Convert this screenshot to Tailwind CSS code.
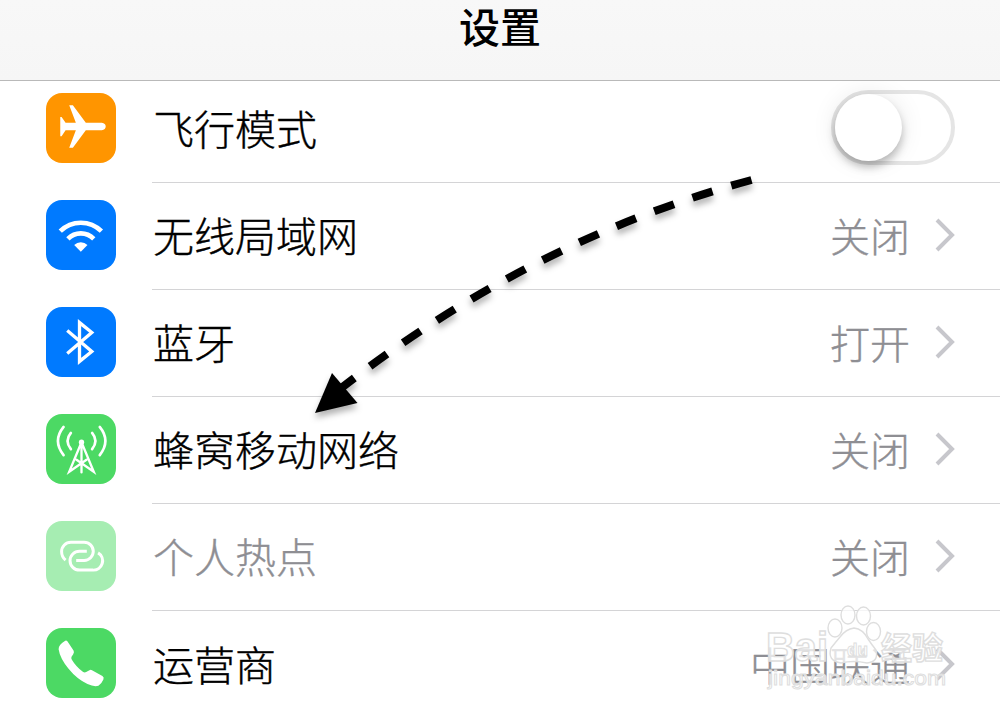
<!DOCTYPE html>
<html lang="zh-CN">
<head>
    <meta charset="UTF-8">
    <meta name="viewport" content="width=device-width, initial-scale=1.0">
    <title>设置</title>
    <script src="https://cdn.jsdelivr.net/npm/@tailwindcss/browser@4"></script>
</head>
<body class="bg-white text-black font-['Noto_Sans_CJK_SC',sans-serif] overflow-hidden">
    <div class="relative w-[1000px] h-[713px] overflow-hidden">

        <!-- Header -->
        <header class="relative z-10 h-[81px] flex justify-center border-b border-[#b9b9b9] bg-linear-to-b from-[#f8f8f8] to-[#f6f6f6]">
            <h1 class="text-[41px] leading-[51px] font-medium">设置</h1>
        </header>

        <!-- Settings list -->
        <main class="-mt-[5px] [-webkit-text-stroke:0.4px]">
            <div class="flex h-[107px] pl-[46px]">
                <div class="flex w-[106px] items-center pb-[4px]">
                    <svg class="size-[70px] rounded-[16px] bg-[#ff9500]" viewBox="0 0 211 211" fill="#fff">
                        <path d="M70 37h11L120 90H168Q180 92 180 101Q180 110 168 112H120L81 165H70L90 112H59L47 130H43V72H47L59 90H90Z"/>
                    </svg>
                </div>
                <div class="flex flex-1 items-center justify-between border-b border-[#d4d4d6] pb-[2px] pl-px pr-[45px]">
                    <span class="text-[41px] font-light">飞行模式</span>
                    <span class="mb-[2px] flex h-[75px] w-[124px] items-start rounded-full border-4 border-[#e5e5e5]">
                        <span class="size-[67px] rounded-full bg-white shadow-[0_6px_8px_rgba(0,0,0,0.25),0_0_26px_rgba(0,0,0,0.09)]"></span>
                    </span>
                </div>
            </div>

            <div class="flex h-[107px] pl-[46px]">
                <div class="flex w-[106px] items-center pb-[4px]">
                    <svg class="size-[70px] rounded-[16px] bg-[#007aff]" viewBox="0 0 211 211" fill="none" stroke="#fff" stroke-width="14">
                        <path d="M43 94A88 88 0 0 1 167 94M66 117A55 55 0 0 1 144 117"/>
                        <path d="M105 156L85 136A28 28 0 0 1 125 136Z" fill="#fff" stroke="none"/>
                    </svg>
                </div>
                <div class="flex flex-1 items-center justify-between border-b border-[#d4d4d6] pb-[2px] pl-px pr-[45px]">
                    <span class="text-[41px] font-light">无线局域网</span>
                    <span class="flex items-center gap-[25px] text-[40px] font-light text-[#8e8e93]">关闭
                        <svg class="h-[34px] w-[20px]" viewBox="0 0 20 34" fill="none" stroke="#c7c7cc" stroke-width="4"><path d="M2 2L17 17L2 32"/></svg>
                    </span>
                </div>
            </div>

            <div class="flex h-[107px] pl-[46px]">
                <div class="flex w-[106px] items-center pb-[4px]">
                    <svg class="size-[70px] rounded-[16px] bg-[#007aff]" viewBox="0 0 211 211" fill="none" stroke="#fff" stroke-width="10">
                        <path d="M64 71L138 134L101 164V47L138 77L64 140"/>
                    </svg>
                </div>
                <div class="flex flex-1 items-center justify-between border-b border-[#d4d4d6] pb-[2px] pl-px pr-[45px]">
                    <span class="text-[41px] font-light">蓝牙</span>
                    <span class="flex items-center gap-[25px] text-[40px] font-light text-[#8e8e93]">打开
                        <svg class="h-[34px] w-[20px]" viewBox="0 0 20 34" fill="none" stroke="#c7c7cc" stroke-width="4"><path d="M2 2L17 17L2 32"/></svg>
                    </span>
                </div>
            </div>

            <div class="flex h-[107px] pl-[46px]">
                <div class="flex w-[106px] items-center pb-[4px]">
                    <svg class="size-[70px] rounded-[16px] bg-[#4cd964]" viewBox="0 0 211 211" fill="none" stroke="#fff" stroke-width="8" stroke-linecap="round">
                        <path d="M75 57Q55 81 75 106M53 39Q19 81 53 124M139 57Q159 81 139 106M162 39Q196 81 162 124"/>
                        <path d="M107 85V176M107 85L70 174L122 138M107 85L144 174L92 138" stroke-width="7"/>
                        <circle cx="107" cy="85" r="8" fill="#fff" stroke="none"/>
                    </svg>
                </div>
                <div class="flex flex-1 items-center justify-between border-b border-[#d4d4d6] pb-[2px] pl-px pr-[45px]">
                    <span class="text-[41px] font-light">蜂窝移动网络</span>
                    <span class="flex items-center gap-[25px] text-[40px] font-light text-[#8e8e93]">关闭
                        <svg class="h-[34px] w-[20px]" viewBox="0 0 20 34" fill="none" stroke="#c7c7cc" stroke-width="4"><path d="M2 2L17 17L2 32"/></svg>
                    </span>
                </div>
            </div>

            <div class="flex h-[107px] pl-[46px]">
                <div class="flex w-[106px] items-center pb-[4px]">
                    <svg class="size-[70px] rounded-[16px] bg-[#a6edb2]" viewBox="0 0 211 211" fill="none" stroke="#fff" stroke-width="9">
                        <path d="M59 118Q47 108 47 92A28 28 0 0 1 75 64H115A27 27 0 0 1 115 119H91"/>
                        <path d="M123 91H101A27.5 27.5 0 0 0 101 148H141A28 28 0 0 0 157 96"/>
                    </svg>
                </div>
                <div class="flex flex-1 items-center justify-between border-b border-[#d4d4d6] pb-[2px] pl-px pr-[45px]">
                    <span class="text-[41px] font-light text-[#8e8e93]">个人热点</span>
                    <span class="flex items-center gap-[25px] text-[40px] font-light text-[#8e8e93]">关闭
                        <svg class="h-[34px] w-[20px]" viewBox="0 0 20 34" fill="none" stroke="#c7c7cc" stroke-width="4"><path d="M2 2L17 17L2 32"/></svg>
                    </span>
                </div>
            </div>

            <div class="flex h-[107px] pl-[46px]">
                <div class="flex w-[106px] items-center pb-[4px]">
                    <svg class="size-[70px] rounded-[16px] bg-[#4cd964]" viewBox="0 0 211 211" fill="#fff">
                        <path d="M57 39Q61 36 65 41L83 68Q86 73 82 79L77 87Q75 91 78 96Q91 118 112 133Q117 136 121 133L131 127Q135 125 140 128L170 145Q176 149 173 155Q167 169 158 174Q145 178 125 169Q93 154 68 123Q42 91 38 64Q37 51 57 39Z"/>
                    </svg>
                </div>
                <div class="flex flex-1 items-center justify-between pb-[2px] pl-px pr-[45px]">
                    <span class="text-[41px] font-light">运营商</span>
                    <span class="flex items-center gap-[25px] text-[40px] font-light text-[#8e8e93]">中国联通
                        <svg class="h-[34px] w-[20px]" viewBox="0 0 20 34" fill="none" stroke="#c7c7cc" stroke-width="4"><path d="M2 2L17 17L2 32"/></svg>
                    </span>
                </div>
            </div>
        </main>

        <!-- Dashed arrow -->
        <svg class="absolute inset-0 z-20 h-[713px] w-[1000px] drop-shadow-[0_5px_3px_rgba(0,0,0,0.3)]" viewBox="0 0 1000 713">
            <path d="M751.5 180Q531 240 340 389" fill="none" stroke="#000" stroke-width="8" stroke-dasharray="21 19.6"/>
            <path d="M332 373L357.5 403L315 413Z"/>
        </svg>

        <!-- Watermark -->
        <svg class="absolute inset-0 z-30 h-[713px] w-[1000px]" viewBox="0 0 1000 713" fill="#fff" fill-opacity="0.75" stroke="#dedede" stroke-width="1.4">
            <ellipse cx="835" cy="628" rx="7" ry="9"/>
            <ellipse cx="848" cy="615" rx="7" ry="9"/>
            <ellipse cx="863.5" cy="616" rx="7" ry="9"/>
            <ellipse cx="873.5" cy="631.5" rx="7" ry="9"/>
            <path d="M854 628Q863 629 868 639Q872 645 876 650Q879 662 867 663Q853 660 841 663Q827 661 831 648Q835 643 840 637Q846 629 854 628Z"/>
            <text x="766" y="660.5" class="font-['Liberation_Sans',sans-serif] text-[40px] font-bold" textLength="62" lengthAdjust="spacingAndGlyphs">Bai</text>
            <text x="847" y="656" class="font-['Liberation_Sans',sans-serif] text-[18px] font-bold" stroke-width="1" textLength="21" lengthAdjust="spacingAndGlyphs">du</text>
            <text x="881" y="659" class="font-['Noto_Sans_CJK_SC',sans-serif] text-[31px] font-bold">经验</text>
            <text x="768" y="685" class="font-['Liberation_Sans',sans-serif] text-[21px]" stroke-width="1" textLength="178" lengthAdjust="spacingAndGlyphs">jingyanbaidu.com</text>
        </svg>
    </div>
</body>
</html>
